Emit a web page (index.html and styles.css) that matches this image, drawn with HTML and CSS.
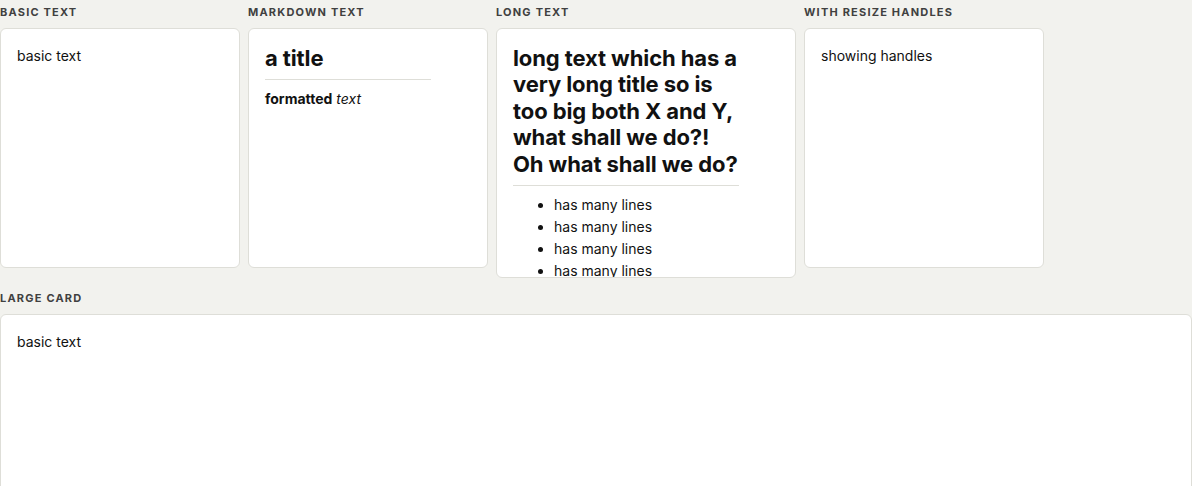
FILE: index.html
```html
<!DOCTYPE html>
<html>
<head>
<meta charset="utf-8">
<link rel="stylesheet" href="styles.css">
</head>
<body>
<div class="page">
  <div class="row">
    <section class="item">
      <div class="label">Basic text</div>
      <div class="card">
        <p>basic text</p>
      </div>
    </section>
    <section class="item">
      <div class="label">Markdown text</div>
      <div class="card">
        <h1 class="title">a title</h1>
        <p><strong>formatted</strong> <em>text</em></p>
      </div>
    </section>
    <section class="item">
      <div class="label">Long text</div>
      <div class="card card-long">
        <h1 class="title">long text which has a very long title so is too big both X and Y, what shall we do?! Oh what shall we do?</h1>
        <ul class="list">
          <li>has many lines</li>
          <li>has many lines</li>
          <li>has many lines</li>
          <li>has many lines</li>
          <li>has many lines</li>
          <li>has many lines</li>
        </ul>
      </div>
    </section>
    <section class="item">
      <div class="label">With resize handles</div>
      <div class="card">
        <p>showing handles</p>
      </div>
    </section>
  </div>
  <section class="item item-large">
    <div class="label">Large card</div>
    <div class="card card-large">
      <p>basic text</p>
    </div>
  </section>
</div>
</body>
</html>
```

FILE: styles.css
```css
* { box-sizing: border-box; }
html, body {
  margin: 0;
  padding: 0;
  background: #f2f2ee;
  font-family: Inter, "Noto Sans", sans-serif;
  color: #111;
  overflow: hidden;
}
.page {
  display: flex;
  flex-direction: column;
  gap: 8px;
}
.row {
  display: flex;
  gap: 8px;
  align-items: flex-start;
}
.item {
  display: flex;
  flex-direction: column;
}
.label {
  font-size: 11px;
  line-height: 24px;
  font-weight: 700;
  letter-spacing: 1.2px;
  text-transform: uppercase;
  color: #404040;
  margin-bottom: 4px;
}
.card {
  width: 240px;
  height: 240px;
  background: #fff;
  border: 1px solid #deded8;
  border-radius: 6px;
  padding: 16px;
  overflow: hidden;
  font-size: 14px;
  line-height: 22px;
}
.card p { margin: 0; }
.card-long {
  width: 300px;
  height: 250px;
}
.card-large {
  width: 1192px;
  height: 320px;
}
.title {
  font-size: 22px;
  line-height: 26.4px;
  font-weight: 700;
  letter-spacing: -0.1px;
  margin: 0 40px 8px 0;
  padding-bottom: 8px;
  border-bottom: 1px solid #deded8;
}
.list {
  margin: 0;
  padding-left: 41px;
  line-height: 22px;
}
```
